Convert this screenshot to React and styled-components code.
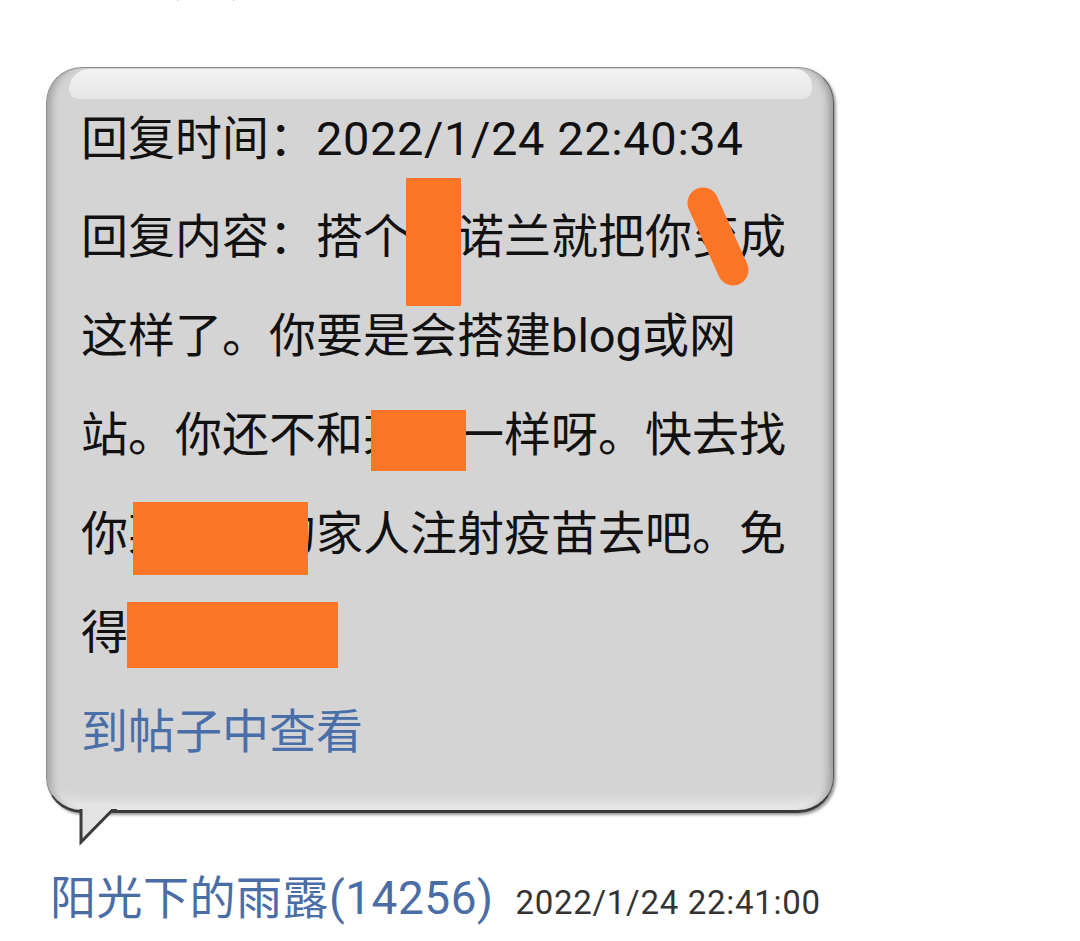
import React from "react";
import styled, { createGlobalStyle } from "styled-components";

const GlobalStyle = createGlobalStyle`
  html, body {
    margin: 0;
    padding: 0;
    background: #ffffff;
    overflow: hidden;
  }
  body {
    font-family: Roboto, "Noto Sans CJK SC", sans-serif;
  }
`;

const App = () => {
  return (
    <Root>
      <GlobalStyle />
      <PrevName>(12)</PrevName>

      <Bubble>
        <Line $lh={97}>
          回复时间：<Stamp>2022/1/24 22:40:34</Stamp>
        </Line>
        <Line>
          回复内容：搭个
          <Hidden>
            某
            <Mark $l={-4} $t={-9} $w={55} $h={128} />
          </Hidden>
          诺兰就把你
          <Hidden>
            变
            <Scribble width="64" height="104" $l={-6} $t={-2}>
              <line
                x1="17"
                y1="18"
                x2="47"
                y2="85"
                stroke="#fd7628"
                strokeWidth="31"
                strokeLinecap="round"
              />
            </Scribble>
          </Hidden>
          成
        </Line>
        <Line>这样了。你要是会搭建blog或网</Line>
        <Line>
          站。你还不和
          <Hidden>
            某某
            <Mark $l={8} $t={25} $w={95} $h={61} />
          </Hidden>
          一样呀。快去找
        </Line>
        <Line>
          你
          <Hidden>
            某某某
            <Mark $l={5} $t={18} $w={175} $h={73} />
          </Hidden>
          的家人注射疫苗去吧。免
        </Line>
        <Line>
          得
          <Hidden>
            某某某某
            <Mark $l={-1} $t={19} $w={211} $h={66} />
          </Hidden>
        </Line>
        <LinkLine>到帖子中查看</LinkLine>

        <Tail width="40" height="44" viewBox="0 0 40 44">
          <polygon points="4,0 4,39 36,7 36,0" fill="#e3e3e3" />
          <polyline
            points="4,6 4,39 35,7.5 40,7.5"
            fill="none"
            stroke="#3b3b3b"
            strokeWidth="3"
          />
        </Tail>
      </Bubble>

      <Author>
        <Name>阳光下的雨露(14256)</Name>
        <Time>2022/1/24 22:41:00</Time>
      </Author>
    </Root>
  );
};

export default App;

const Root = styled.div`
  display: flex;
  flex-direction: column;
  align-items: flex-start;
  width: 1080px;
  height: 941px;
  overflow: hidden;
`;

const PrevName = styled.div`
  margin-top: -56px;
  padding-left: 164px;
  height: 60px;
  font-size: 46px;
  line-height: 60px;
  color: #4a6da6;
`;

const Bubble = styled.div`
  position: relative;
  box-sizing: border-box;
  width: 788px;
  margin: 63px 0 0 46px;
  padding: 22px 20px 29px 34px;
  background: #d4d4d4;
  border: 1px solid #8e8e8e;
  border-right-color: #5a5a5a;
  border-bottom: 3px solid #3b3b3b;
  border-radius: 36px;
  box-shadow: inset 11px 0 10px -8px rgba(0, 0, 0, 0.3),
    inset -11px 0 10px -8px rgba(0, 0, 0, 0.34),
    inset 0 -16px 12px -8px rgba(255, 255, 255, 0.55),
    2px 2px 3px rgba(0, 0, 0, 0.4);
  color: #111111;
  font-size: 47px;

  &::before {
    content: "";
    position: absolute;
    left: 22px;
    right: 21px;
    top: 1px;
    height: 30px;
    border-radius: 26px 22px 12px 12px;
    background: linear-gradient(#f3f3f3, #e5e5e5);
  }
`;

const Line = styled.div`
  position: relative;
  line-height: ${({ $lh }) => $lh || 99}px;
  white-space: nowrap;
`;

const Stamp = styled.span`
  letter-spacing: 0.6px;
`;

const LinkLine = styled(Line)`
  color: #4a6fa8;
`;

const Hidden = styled.span`
  position: relative;
  display: inline-block;
`;

const Mark = styled.span`
  position: absolute;
  left: ${({ $l }) => $l}px;
  top: ${({ $t }) => $t}px;
  width: ${({ $w }) => $w}px;
  height: ${({ $h }) => $h}px;
  background: #fd7628;
`;

const Scribble = styled.svg`
  position: absolute;
  left: ${({ $l }) => $l}px;
  top: ${({ $t }) => $t}px;
  overflow: visible;
`;

const Tail = styled.svg`
  position: absolute;
  left: 30px;
  bottom: -37px;
  overflow: visible;
`;

const Author = styled.div`
  display: flex;
  align-items: baseline;
  gap: 22px;
  margin-top: 55px;
  padding-left: 50px;
  line-height: 60px;
`;

const Name = styled.span`
  font-size: 46px;
  letter-spacing: 0.5px;
  color: #4a6da6;
`;

const Time = styled.span`
  font-size: 33px;
  letter-spacing: 0.7px;
  color: #333333;
`;
